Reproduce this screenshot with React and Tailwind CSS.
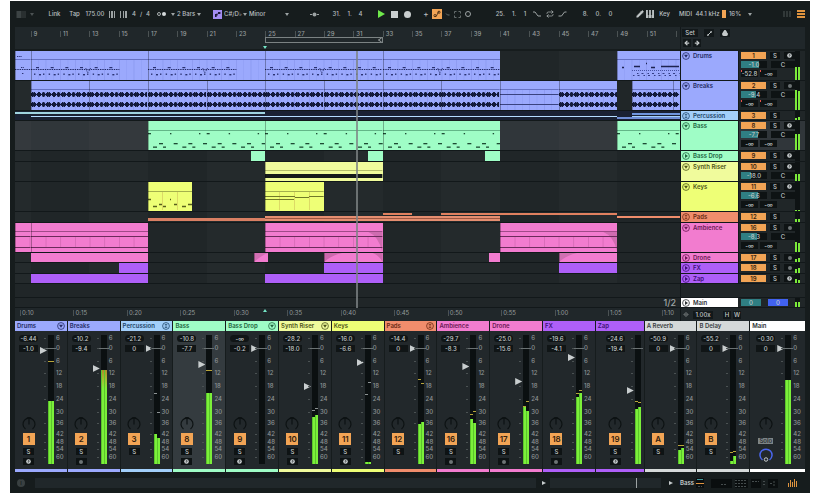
import { ArrowLeft, ArrowRight, Lock, Pencil, Repeat } from 'lucide-react';
import clsx from 'clsx';

const FIRST_BAR = 7.94;
const BARS = 45.33;
const BAR_PX = 14.67;

const pct = (bar) => `${((bar - FIRST_BAR) / BARS) * 100}%`;
const widthPct = (from, to) => `${((to - from) / BARS) * 100}%`;

const END = FIRST_BAR + BARS;

const tracks = [
  { id: '1', name: 'Drums', height: 'h-[30px]', color: 'bg-[#9ba9fd]', text: 'text-[#252c66]', fold: 'down', arm: 'note', vol: '-1.0', fill: 18, sends: ['-52.8', '-∞'], level: [13, 13],
    clips: [[FIRST_BAR, 9, 'drumsIntro'], [9, 17, 'drumsShort'], [17, 25, 'drumsShort'], [25, 33, 'drums'], [33, 41, 'drums'], [49, END, 'drumsOutro']] },
  { id: '2', name: 'Breaks', height: 'h-[30px]', color: 'bg-[#9ba9fd]', text: 'text-[#252c66]', fold: 'down', arm: 'dot', vol: '-9.4', fill: 15, sends: ['-∞', '-∞'], level: [20, 19],
    clips: [[9, 13, 'wave'], [13, 17, 'wave'], [17, 21, 'wave'], [21, 25, 'wave'], [25, 29, 'wave'], [29, 33, 'wave'], [33, 37, 'wave'], [37, 41, 'wave'], [41, 45, 'flat'], [45, 49, 'wave'], [50, 52.8, 'wave'], [52.8, END, 'wave']] },
  { id: '3', name: 'Percussion', height: 'h-[10px]', color: 'bg-[#a2cffa]', text: 'text-[#1d4568]', fold: 'group', level: [2, 3] },
  { id: '8', name: 'Bass', height: 'h-[30px]', color: 'bg-[#9ffdc6]', text: 'text-[#22653f]', fold: 'down', arm: 'note', vol: '-7.7', fill: 17, sends: ['-∞', '-∞'], level: [16, 16], selected: true,
    clips: [[17, 25, 'bass'], [25, 33, 'bass'], [33, 41, 'bass'], [49, END, 'bass']] },
  { id: '9', name: 'Bass Drop', height: 'h-[11px]', color: 'bg-[#9ffdc6]', text: 'text-[#22653f]', fold: 'right', arm: 'note', level: [0, 0],
    clips: [[24, 25], [32, 33], [40, 41]] },
  { id: '10', name: 'Synth Riser', height: 'h-[20px]', color: 'bg-[#f0fb9c]', text: 'text-[#4d5518]', fold: 'down', arm: 'note', vol: '-18.0', fill: 10, level: [7, 7],
    clips: [[25, 33, 'riser']] },
  { id: '11', name: 'Keys', height: 'h-[30px]', color: 'bg-[#eeff76]', text: 'text-[#4d5518]', fold: 'down', arm: 'note', vol: '-6.6', fill: 17, sends: ['-∞', '-∞'], level: [1, 1],
    clips: [[17, 20, 'keys'], [25, 29, 'chords']] },
  { id: '12', name: 'Pads', height: 'h-[11px]', color: 'bg-[#f08d6c]', text: 'text-[#6b2a14]', fold: 'group', level: [3, 3] },
  { id: '16', name: 'Ambience', height: 'h-[30px]', color: 'bg-[#f27ccf]', text: 'text-[#6a1853]', fold: 'down', arm: 'dot', vol: '-8.3', fill: 16, sends: ['-∞', '-∞'], level: [10, 9],
    clips: [[FIRST_BAR, 9, 'ambience'], [9, 17, 'ambience'], [25, 33, 'ambienceFade'], [41, 49, 'ambienceFade']] },
  { id: '17', name: 'Drone', height: 'h-[10px]', color: 'bg-[#f27ccf]', text: 'text-[#6a1853]', fold: 'right', arm: 'dot', level: [3, 4],
    clips: [[9, 17], [24.25, 25.2, 'fadeIn'], [29, 33, 'fadeBoth'], [40.25, 41], [45, 49, 'fadeIn']] },
  { id: '18', name: 'FX', height: 'h-[11px]', color: 'bg-[#ae5ff8]', text: 'text-[#3d0f75]', fold: 'right', arm: 'dot', level: [4, 5],
    clips: [[15, 17], [29, 33], [45, 49]] },
  { id: '19', name: 'Zap', height: 'h-[10px]', color: 'bg-[#ae5ff8]', text: 'text-[#3d0f75]', fold: 'right', arm: 'note', level: [4, 3],
    clips: [[9, 17], [25, 33]] },
];

// thin content of folded group tracks: from, to, top, height, colour
const overviews = {
  3: [
    [FIRST_BAR, 25, 1, 2, 'bg-[#9fd3e0]'],
    [9, 49, 5, 1, 'bg-[#b4dcff]'],
    [49, END, 6, 2, 'bg-[#6f8ed6]'],
    [50, END, 2, 2, 'bg-[#6f96dd]'],
    [50, END, 5, 1, 'bg-[#a2cffa]'],
  ],
  12: [
    [17, 25, 6, 3, 'bg-[#d97f63]'],
    [25, 41, 4, 2, 'bg-[#e58e70]'],
    [25, 41, 6, 1, 'bg-[#9c5641]'],
    [25, 41, 7, 2, 'bg-[#e58e70]'],
    [33, 35, 1, 2, 'bg-[#e0805f]'],
    [37, 49, 1, 2, 'bg-[#e0805f]'],
    [49, END, 4, 2, 'bg-[#f08d6c]'],
  ],
};

// fader is the slider travel, level/marks are pixels above the bottom of the meter
const strips = [
  { id: '1', name: 'Drums', color: 'bg-[#9ba9fd]', text: 'text-[#252c66]', badge: 'down', peak: '-6.44', vol: '-1.0', fader: 110, level: [63, 63], marks: [102, 102], arm: 'note' },
  { id: '2', name: 'Breaks', color: 'bg-[#9ba9fd]', text: 'text-[#252c66]', peak: '-10.2', vol: '-9.4', fader: 92, level: [94, 94], hot: true, arm: 'dot' },
  { id: '3', name: 'Percussion', color: 'bg-[#a2cffa]', text: 'text-[#1d4568]', badge: 'group', peak: '-21.2', vol: '0', fader: 112, level: [30, 26], marks: [70, 51], dim: true },
  { id: '8', name: 'Bass', color: 'bg-[#9ffdc6]', text: 'text-[#22653f]', peak: '-10.8', vol: '-7.7', fader: 96, level: [71, 71], marks: [93, 93], arm: 'note', selected: true },
  { id: '9', name: 'Bass Drop', color: 'bg-[#9ffdc6]', text: 'text-[#22653f]', badge: 'down', peak: '-∞', vol: '-0.2', fader: 112, level: [0, 0], arm: 'note' },
  { id: '10', name: 'Synth Riser', color: 'bg-[#f0fb9c]', text: 'text-[#4d5518]', badge: 'down', peak: '-28.2', vol: '-18.0', fader: 74, level: [47, 49], marks: [53, 55], dim: true, arm: 'note' },
  { id: '11', name: 'Keys', color: 'bg-[#eeff76]', text: 'text-[#4d5518]', peak: '-16.0', vol: '-6.6', fader: 98, level: [2, 2], marks: [69, 81], dim: true, arm: 'note' },
  { id: '12', name: 'Pads', color: 'bg-[#f08d6c]', text: 'text-[#6b2a14]', badge: 'group', peak: '-14.4', vol: '0', fader: 112, level: [40, 42], marks: [84, 80] },
  { id: '16', name: 'Ambience', color: 'bg-[#f27ccf]', text: 'text-[#6a1853]', peak: '-29.7', vol: '-8.3', fader: 94, level: [45, 41], marks: [49, 52], arm: 'dot' },
  { id: '17', name: 'Drone', color: 'bg-[#f27ccf]', text: 'text-[#6a1853]', peak: '-25.0', vol: '-15.6', fader: 79, level: [57, 53], marks: [57, 62], arm: 'dot' },
  { id: '18', name: 'FX', color: 'bg-[#ae5ff8]', text: 'text-[#3d0f75]', peak: '-19.6', vol: '-4.1', fader: 103, level: [67, 71], marks: [70, 73], arm: 'dot' },
  { id: '19', name: 'Zap', color: 'bg-[#ae5ff8]', text: 'text-[#3d0f75]', peak: '-24.6', vol: '-19.4', fader: 70, level: [55, 57], marks: [62, 61], arm: 'note', narrow: true },
  { id: 'A', name: 'A Reverb', color: 'bg-[#d5d9d9]', text: 'text-[#3a4042]', peak: '-50.9', vol: '0', fader: 112, level: [14, 16], marks: [18, 18] },
  { id: 'B', name: 'B Delay', color: 'bg-[#d5d9d9]', text: 'text-[#3a4042]', peak: '-55.2', vol: '0', fader: 112, level: [3, 8], marks: [11, 12] },
  { id: 'main', name: 'Main', color: 'bg-white', text: 'text-[#2c3133]', peak: '-0.30', vol: '0', fader: 112, level: [84, 84], main: true },
];

const scale = [[3, '6'], [13, '0'], [26, '6'], [38, '12'], [51, '18'], [64, '24'], [77, '30'], [88, '36'], [99, '42'], [107, '48'], [114, '54'], [122, '60']];

const times = ['0:10', '0:15', '0:20', '0:25', '0:30', '0:35', '0:40', '0:45', '0:50', '0:55', '1:00', '1:05', '1:10'];

const range = (n) => Array.from({ length: n }, (_, i) => i);

const Caret = ({ className }) => (
  <svg viewBox="0 0 4 3" className={clsx('h-[3px] w-1 shrink-0 fill-[#9da3a4]', className)}>
    <path d="M0 0h4L2 3z" />
  </svg>
);

const FoldIcon = ({ type }) => (
  <svg viewBox="0 0 16 16" className="h-2 w-2 shrink-0 fill-none stroke-current">
    <circle cx="8" cy="8" r="6.8" strokeWidth="1.6" />
    {type === 'down' && <path d="M4 5.5h8L8 11.5z" className="fill-current" stroke="none" />}
    {type === 'right' && <path d="M6 4v8L12 8z" className="fill-current" stroke="none" />}
    {type === 'group' && <path d="M5.5 5h5M5.5 8h5M5.5 11h5" strokeWidth="1.5" />}
  </svg>
);

const ArmButton = ({ type, label }) => (
  <button aria-label={`Arm ${label}`} className="flex h-[7px] w-[11px] items-center justify-center bg-[#0e1314]">
    {type === 'note' ? (
      <svg viewBox="0 0 10 10" className="h-[5px] w-[5px]">
        <circle cx="5" cy="5" r="4.6" fill="#d0d5d6" />
        <path d="M4.5 7.5V3l3 1.5" fill="none" stroke="#1b2022" strokeWidth="1.4" />
      </svg>
    ) : (
      <span className="h-1 w-1 rounded-full bg-[#6d7475]" />
    )}
  </button>
);

/* ---------- clip contents ---------- */

const ClipSvg = ({ width, height = 29, children }) => (
  <svg viewBox={`0 0 ${width} ${height}`} preserveAspectRatio="none" className="absolute inset-0 h-full w-full">
    {children}
  </svg>
);

const Grid = ({ width, color = '#5a67c4' }) =>
  range(Math.ceil(width / 7.335) - 1).map((i) => (
    <rect key={i} x={(i + 1) * 7.335} y="9" width="0.6" height="20" fill={color} opacity={i % 2 ? 0.3 : 0.15} />
  ));

const DrumNotes = ({ width, until }) => (
  <ClipSvg width={width}>
    <Grid width={width} />
    <path d={`M0 8.5H${width}`} stroke="#6571c4" strokeWidth="1" />
    <path d={`M0 18.5H${until}`} stroke="#222a66" strokeWidth="1" strokeDasharray="1.4 0.9" />
    {range(Math.floor(until / BAR_PX)).map((i) => (
      <g key={i} fill="#2a3272">
        <rect x={i * BAR_PX + 5} y="16" width="3" height="1.2" />
        <rect x={i * BAR_PX + 3} y="22.5" width="1.4" height="1.4" />
        <rect x={i * BAR_PX + 8} y="23" width="2" height="1.4" />
        <rect x={i * BAR_PX + 12} y="22.5" width="1.4" height="1.4" />
      </g>
    ))}
    <path d={`M${width / 2 - 4} 17l2 5 3-5`} stroke="#2a3272" strokeWidth="0.8" fill="none" strokeDasharray="1.5 1" />
  </ClipSvg>
);

const WAVE = [3, 5, 4, 5, 3, 1, 3, 5, 5, 3, 1, 4, 5, 4, 1.2];

const Wave = ({ width }) => (
  <ClipSvg width={width}>
    <Grid width={width} />
    <path d={`M0 8.5H${width}`} stroke="#6571c4" strokeWidth="1" />
    {range(Math.floor(width)).map((i) => {
      const h = WAVE[i % WAVE.length];
      return (
        <g key={i} fill="#141b3c">
          <rect x={i} y={13.5 - h / 2} width="1.05" height={h} />
          <rect x={i} y={23.5 - h / 2} width="1.05" height={h} />
        </g>
      );
    })}
  </ClipSvg>
);

const BassNotes = ({ width }) => (
  <ClipSvg width={width}>
    <path d={`M0 9.5H${width}`} stroke="#62b688" strokeWidth="1" />
    <g fill="#1d4a33">
      {range(Math.ceil(width / BAR_PX)).map((i) => (
        <rect key={i} x={i * BAR_PX + 11} y="22" width="4" height="1.3" />
      ))}
      {range(Math.ceil(width / BAR_PX / 2)).map((i) => (
        <g key={i}>
          <rect x={i * BAR_PX * 2 + 5} y="25.5" width="4" height="1.3" />
          <rect x={i * BAR_PX * 2 + 15} y="25.5" width="3" height="1.3" />
        </g>
      ))}
      {range(Math.ceil(width / BAR_PX / 4)).map((i) => (
        <g key={i}>
          <rect x={i * BAR_PX * 4} y="12" width="3" height="1.3" />
          <rect x={i * BAR_PX * 4 + 22} y="12" width="1.4" height="1.3" />
          <rect x={i * BAR_PX * 4 + 51} y="12" width="1.4" height="1.3" />
        </g>
      ))}
    </g>
  </ClipSvg>
);

const Ambience = ({ width, fade }) => (
  <ClipSvg width={width}>
    {fade && <path d={`M${width - 14} 9Q${width - 4} 13 ${width} 29V9z`} fill="#cf6cb0" />}
    {range(Math.ceil(width / BAR_PX) - 1).map((i) => (
      <rect key={i} x={(i + 1) * BAR_PX} y="14" width="0.7" height="10" fill="#a04a88" opacity="0.4" />
    ))}
    <path d={`M0 8.5H${width}`} stroke="#a04a88" strokeWidth="1" />
    <path d={`M0 13.5H${width}M0 24.5H${width}`} stroke="#6b2a5a" strokeWidth="1" />
  </ClipSvg>
);

const ClipContent = ({ kind, width }) => {
  switch (kind) {
    case 'drums':
      return <DrumNotes width={width} until={width} />;
    case 'drumsShort':
      return <DrumNotes width={width} until={width - 29} />;
    case 'drumsIntro':
      return (
        <ClipSvg width={width}>
          <path d={`M0 8.5H${width}`} stroke="#6571c4" />
          <path d={`M0 18.5H${width}`} stroke="#222a66" strokeDasharray="1.4 0.9" />
          <path d="M2 5.5H7M6 16.5h3M7 22.5h2" stroke="#2a3272" strokeDasharray="1.4 0.8" />
        </ClipSvg>
      );
    case 'drumsOutro':
      return (
        <ClipSvg width={width}>
          <Grid width={width} />
          <path d={`M0 8.5H${width}`} stroke="#6571c4" />
          <path d="M17 15.5h6M44 15.5h18M5 16.5h2M34 16.5h4M29 12.5h1" stroke="#1d2350" strokeWidth="1.4" />
          <path d={`M15 19.5H${width}`} stroke="#4752a3" strokeDasharray="1 1" />
          <path d={`M16 24.5H${width}M20 22.5H${width}`} stroke="#333c85" strokeWidth="1" strokeDasharray="1.5 3 2 4" />
        </ClipSvg>
      );
    case 'wave':
      return <Wave width={width} />;
    case 'flat':
      return (
        <ClipSvg width={width}>
          <Grid width={width} />
          <path d={`M0 8.5H${width}`} stroke="#6571c4" />
          <path d={`M0 13.5H${width}M0 23.5H${width}`} stroke="#39427f" />
        </ClipSvg>
      );
    case 'bass':
      return <BassNotes width={width} />;
    case 'riser':
      return (
        <ClipSvg width={width} height={19}>
          <path d={`M0 8.5H${width}`} stroke="#b4bd6a" />
          <rect y="12" width={width} height="4" fill="#15191a" />
        </ClipSvg>
      );
    case 'keys':
      return (
        <ClipSvg width={width}>
          <path d={`M0 9.5H${width}`} stroke="#a4b04d" />
          <path d="M14.5 10v18M29.5 10v18" stroke="#d3c95e" strokeWidth="0.7" />
          <path d="M0 17.5h3M22 17.5h1M11 22.5h3M26 22.5h3M40 22.5h4M5 24.5h4M15 24.5h3M34 24.5h4" stroke="#585f1d" strokeWidth="1.3" />
        </ClipSvg>
      );
    case 'chords':
      return (
        <ClipSvg width={width}>
          <path d={`M0 9.5H${width}`} stroke="#a4b04d" />
          <path d="M14.5 10v18M29.5 10v18M44.5 10v18" stroke="#d3c95e" strokeWidth="0.7" />
          <path d={`M0 14.5H30M0 17.5h29M30 15.5h14M44 14.5H${width}`} stroke="#6f7828" strokeWidth="1" />
        </ClipSvg>
      );
    case 'ambience':
      return <Ambience width={width} />;
    case 'ambienceFade':
      return <Ambience width={width} fade />;
    case 'fadeIn':
      return (
        <ClipSvg width={width} height={9}>
          <path d={`M0 0H${Math.min(width, 18)}Q8 2 0 9z`} fill="#d26fb3" />
        </ClipSvg>
      );
    case 'fadeBoth':
      return (
        <ClipSvg width={width} height={9}>
          <path d="M0 0H18Q8 2 0 9z" fill="#cc68ad" />
          <path d={`M${width - 10} 0Q${width - 4} 2 ${width} 9V0z`} fill="#cc68ad" />
        </ClipSvg>
      );
    default:
      return null;
  }
};

const Lane = ({ track }) => (
  <div className={clsx('relative border-b border-[#12181a]', track.height, track.selected ? 'bg-[#30363a]' : 'bg-[#202628]')}>
    {[5, 13, 21, 29, 37, 45].map((bar) => (
      <div key={bar} className="absolute inset-y-0 bg-white/2" style={{ left: pct(Math.max(bar, FIRST_BAR)), width: widthPct(Math.max(bar, FIRST_BAR), bar + 4) }} />
    ))}
    {overviews[track.id] && (
      <div className={clsx('absolute inset-0', track.id === '3' && 'bg-[#1a2133]')}>
        {overviews[track.id].map(([from, to, top, height, color]) => (
          <div key={`${from}-${top}`} className={clsx('absolute', color)} style={{ left: pct(from), width: widthPct(from, to), top, height }} />
        ))}
      </div>
    )}
    {track.clips?.map(([from, to, kind]) => (
      <div key={from} className={clsx('absolute inset-y-0 overflow-hidden', track.color)} style={{ left: pct(from), width: widthPct(from, to) }}>
        <ClipContent kind={kind} width={(to - from) * BAR_PX} />
        {kind && <span className="absolute inset-y-0 left-0 w-px bg-black/30" />}
      </div>
    ))}
  </div>
);

/* ---------- arrangement ---------- */

const Ruler = () => (
  <div className="relative mb-0.5 h-[22px] bg-[#20272a] text-[#969c9d]">
    {range(23).map((i) => (
      <span key={i} className="absolute top-1 border-l border-[#4b5253] pl-0.5 leading-[6px]" style={{ left: pct(9 + i * 2) }}>
        {i < 22 ? 9 + i * 2 : '\u00a0'}
      </span>
    ))}
    <div className="absolute top-[10px] h-[6px] border border-[#7b8283]" style={{ left: pct(25), width: widthPct(25, 33) }}>
      <svg viewBox="0 0 4 5" className="absolute right-0 top-0 h-[4px] w-[4px] fill-none stroke-[#b9bebf]">
        <path d="M4 0L0 2.5 4 5" />
      </svg>
    </div>
    <svg viewBox="0 0 4 3" className="absolute bottom-0 h-[3px] w-1 -translate-x-1/2 fill-[#74e6c6]" style={{ left: pct(25) }}>
      <path d="M0 0h4L2 3z" />
    </svg>
  </div>
);

const Timeline = () => (
  <div className="min-w-0 flex-1">
    <Ruler />
    <div className="relative">
      {tracks.map((track) => (
        <Lane key={track.id} track={track} />
      ))}
      <div className="h-[13px] bg-[#202628]" />
      <div className="flex h-[11px] items-center justify-end border-y border-[#12181a] bg-[#202628] pr-1 text-[9px] text-[#9fa5a6]">1/2</div>
      <div className="absolute inset-y-0 w-0.5 bg-[#7d8384]/80" style={{ left: pct(31.2) }} />
    </div>
    <div className="relative h-[13px] bg-[#20272a] font-normal text-[#969c9d]">
      {times.map((time, i) => (
        <span key={time} className="absolute top-0.5 border-l border-[#4b5253] pl-px leading-[6px]" style={{ left: `${0.75 + i * 8.04}%` }}>
          {time}
        </span>
      ))}
      <svg viewBox="0 0 4 3" className="absolute top-px h-[3px] w-1 -translate-x-1/2 fill-[#74e6c6]" style={{ left: pct(25) }}>
        <path d="M0 3h4L2 0z" />
      </svg>
    </div>
  </div>
);

const MiniMeter = ({ level }) => (
  <div className="flex h-full w-[5px] items-end gap-px bg-[#0e1314]">
    {level.map((h, i) => (
      <span key={i} className="w-[2px] bg-[#7bea3a]" style={{ height: h }} />
    ))}
  </div>
);

const TrackHeader = ({ track }) => (
  <div className={clsx('flex border-b border-[#12181a]', track.height, track.selected ? 'bg-[#30363a]' : 'bg-[#202628]')}>
    <div className={clsx('flex w-[57px] items-start gap-[3px] pl-px pt-px', track.color, track.text)}>
      <button aria-label={`Fold ${track.name}`} className="block">
        <FoldIcon type={track.fold} />
      </button>
      <span className="whitespace-nowrap font-semibold leading-2">{track.name}</span>
    </div>
    <div className="flex flex-1 flex-col gap-0.5 border-l border-[#12181a] pl-0.5 pt-px text-[#c5cacb]">
      <div className="flex">
        <button className="h-[7px] w-[25px] bg-[#f2a455] font-semibold leading-[7px] text-[#3b2510]">{track.id}</button>
        <button className="ml-1 h-[7px] w-[10px] bg-[#0e1314] leading-[7px]">S</button>
        <span className="ml-1">{track.arm && <ArmButton type={track.arm} label={track.name} />}</span>
      </div>
      {track.vol && (
        <div className="flex gap-1">
          <span className="relative h-[7px] w-[26px] bg-[#0e1314] text-center leading-[7px]">
            <span className="absolute inset-y-0 left-0 bg-[#2f7f83]" style={{ width: track.fill }} />
            <span className="relative">{track.vol}</span>
          </span>
          <span className="h-[7px] w-6 bg-[#0e1314] text-center leading-[7px]">C</span>
        </div>
      )}
      {track.sends && (
        <div className="flex gap-0.5">
          {track.sends.map((send, i) => (
            <span key={i} className="relative h-[7px] w-[17px] bg-[#0e1314] text-center leading-[7px]">
              {track.id < 3 && <span className="absolute left-0 top-0 h-0.5 w-px bg-[#e8524a]" />}
              {send}
            </span>
          ))}
        </div>
      )}
    </div>
    <div className="w-[10px]">
      <MiniMeter level={track.level} />
    </div>
  </div>
);

const TrackHeaders = () => (
  <div className="w-[125px] border-l border-[#12181a]">
    <div className="mb-0.5 h-[22px] bg-[#20272a] pl-px text-[#c5cacb]">
      <div className="flex items-center gap-1.5 pt-0.5">
        <button className="w-4 bg-[#12181a] leading-2">Set</button>
        <button aria-label="Draw automation" className="flex h-2 w-2.5 items-center justify-center bg-[#12181a]">
          <svg viewBox="0 0 8 8" className="h-[5px] w-[5px] fill-none stroke-[#d5dadb]"><path d="M1 7l6-6" strokeWidth="1.4" /><circle cx="1.5" cy="6.5" r="1" /><circle cx="6.5" cy="1.5" r="1" /></svg>
        </button>
        <button aria-label="Lock" className="flex h-2 w-2.5 items-center justify-center bg-[#12181a]"><Lock size={6} strokeWidth={4} className="fill-current" /></button>
      </div>
      <div className="flex gap-0.5 pl-px pt-0.5">
        <button aria-label="Previous locator" className="bg-[#12181a] p-px"><ArrowLeft size={6} strokeWidth={5} /></button>
        <button aria-label="Next locator" className="bg-[#12181a] p-px"><ArrowRight size={6} strokeWidth={5} /></button>
      </div>
    </div>
    {tracks.map((track) => (
      <TrackHeader key={track.id} track={track} />
    ))}
    <div className="h-[13px] bg-[#202628]" />
    <div className="flex h-[11px] border-y border-[#12181a] bg-[#202628] text-[#c5cacb]">
      <div className="flex w-[57px] items-center gap-[3px] bg-white pl-px text-[#2c3133]">
        <FoldIcon type="right" />
        <span className="font-semibold leading-2">Main</span>
      </div>
      <div className="flex flex-1 items-center gap-[7px] pl-[3px]">
        <span className="h-[7px] w-5 bg-[#2f7f83] text-center leading-[7px]">0</span>
        <span className="h-[7px] w-5 bg-[#4162f0] text-center leading-[7px]">0</span>
      </div>
      <div className="w-[10px]"><MiniMeter level={[5, 5]} /></div>
    </div>
    <div className="flex h-[13px] items-center bg-[#20272a] pl-0.5 text-[#c5cacb]">
      <svg viewBox="0 0 8 8" className="h-[5px] w-[6px] stroke-[#9da3a4]"><path d="M0 4h1M2 2v4M4 0v8M6 2v4M7 4h1" /></svg>
      <span className="ml-1 w-5 bg-[#12181a] text-center leading-2">1.00x</span>
      <button className="ml-2.5 w-2 bg-[#12181a] leading-2">H</button>
      <button className="ml-0.5 w-2 bg-[#12181a] leading-2">W</button>
    </div>
  </div>
);

/* ---------- mixer ---------- */

const Knob = ({ blue }) => (
  <svg viewBox="0 0 28 28" className="h-[14px] w-[14px] shrink-0 fill-none">
    <path d="M7 24A12 12 0 1 1 21 24" stroke={blue ? '#4a66ee' : '#0d1213'} strokeWidth={blue ? 3 : 2.4} />
    {blue ? (
      <circle cx="14" cy="23" r="3.5" stroke="#c5cacb" strokeWidth="2" />
    ) : (
      <path d="M14 3v12M11 0h6l-3 3z" stroke="#0d1213" strokeWidth="2.4" />
    )}
  </svg>
);

const Meter = ({ strip }) => (
  <div className="relative ml-px flex h-[129px] w-[6px] items-end bg-[#0b1011]">
    {scale.map(([y]) => (
      <span key={y} className="absolute -left-1 h-px w-0.5 bg-[#4b5253]" style={{ top: y }} />
    ))}
    {strip.level.map((h, i) => (
      <span key={i} className={clsx('w-[3px] border-l border-[#5cc42c]', strip.hot ? 'bg-linear-to-t from-[#7bf03a] from-80% to-[#b08a2a]' : 'bg-[#7bf03a]', h === 0 && 'hidden')} style={{ height: h }} />
    ))}
    {strip.marks?.map((y, i) => (
      <span key={`m${i}`} className={clsx('absolute h-px w-[3px]', i ? 'right-0' : 'left-0', strip.dim ? 'bg-[#8d9394]' : 'bg-[#b9a53a]')} style={{ bottom: y }} />
    ))}
    <span className="absolute -left-0.5 top-[13px] h-px w-[10px] bg-[#6a7172]" />
  </div>
);

const Strip = ({ strip }) => (
  <section className={clsx('min-w-0 overflow-hidden', strip.selected ? 'bg-[#343b3f]' : 'bg-[#22282b]')}>
    <header className={clsx('flex h-[10px] items-center justify-between px-0.5', strip.color, strip.text)}>
      <span className="whitespace-nowrap font-semibold">{strip.name}</span>
      {strip.badge && <FoldIcon type={strip.badge} />}
    </header>
    <div className={clsx('flex h-[138px] pt-1', strip.narrow ? 'pl-[10px]' : strip.main ? 'pl-1.5' : 'pl-1')}>
      <div className="flex h-[130px] w-[19px] shrink-0 flex-col items-center text-[#c5cacb]">
        <span className="h-[7px] w-[19px] rounded-sm bg-[#101516] text-center leading-[7px]">{strip.peak}</span>
        <span className="mt-[3px] h-[7px] w-[19px] bg-[#101516] text-center leading-[7px]">{strip.vol}</span>
        <div className="mt-auto flex h-12 flex-col items-center">
          <Knob />
          {strip.main ? (
            <>
              <button className="mb-1 mt-[7px] h-[6px] bg-[#7e8587] px-px leading-[6px] text-[#22282b]">Solo</button>
              <Knob blue />
            </>
          ) : (
            <>
              <button className="mt-0.5 h-3 w-3 bg-[#f2a455] text-[8px] font-semibold leading-3 text-[#33200d]">{strip.id}</button>
              <button className="mt-[3px] h-[7px] w-[11px] bg-[#0e1314] leading-[7px]">S</button>
              <span className="mt-[3px]">{strip.arm && <ArmButton type={strip.arm} label={strip.name} />}</span>
            </>
          )}
        </div>
      </div>
      <input
        type="range"
        aria-label={`${strip.name} volume`}
        min="0"
        max="122"
        defaultValue={strip.fader}
        className="ml-0.5 h-[129px] w-[7px] shrink-0 appearance-none bg-transparent [direction:rtl] [writing-mode:vertical-lr] [&::-webkit-slider-thumb]:h-[7px] [&::-webkit-slider-thumb]:w-[7px] [&::-webkit-slider-thumb]:appearance-none [&::-webkit-slider-thumb]:bg-[#c9cecf] [&::-webkit-slider-thumb]:[clip-path:polygon(0_0,100%_50%,0_100%)]"
      />
      <Meter strip={strip} />
      {!strip.narrow && (
        <div className="relative ml-0.5 h-[129px] w-2 shrink-0 text-[#8f9596]">
          {scale.map(([y, label]) => (
            <span key={y} className="absolute left-0 -translate-y-1/2 leading-[6px]" style={{ top: y }}>{label}</span>
          ))}
        </div>
      )}
    </div>
    <div className={clsx('h-[3px]', strip.color)} />
  </section>
);

const Mixer = () => (
  <div className="grid grid-cols-[repeat(11,53fr)_49fr_53fr_53fr_56fr] gap-px">
    {strips.map((strip) => (
      <Strip key={strip.id} strip={strip} />
    ))}
  </div>
);

/* ---------- transport ---------- */

const Select = ({ label, value, className }) => (
  <label className={clsx('flex items-center', className)}>
    <select aria-label={label} defaultValue={value} className="min-w-0 flex-1 appearance-none bg-transparent">
      <option>{value}</option>
    </select>
    <Caret />
  </label>
);

const Position = ({ value, label, className }) => (
  <div aria-label={label} className={clsx('flex justify-around whitespace-pre', className)}>
    {value.map((part, i) => (
      <span key={i}>{part}</span>
    ))}
  </div>
);

const TransportBar = () => (
  <header className="flex h-[26px] items-center text-[#b9bfc0]">
    <div className="flex items-center gap-0.5">
      <svg viewBox="0 0 10 7" className="h-[7px] w-[13px] fill-[#3c4344]"><path d="M0 0h5v7H0zM6 0h1v7H6zM8 0h1v7H8z" /></svg>
      <span className="w-1"><Caret className="opacity-40" /></span>
      <button className="ml-2 w-[21px]">Link</button>
      <button className="w-[15px]">Tap</button>
      <input aria-label="Tempo" defaultValue="175.00" className="w-[22px] bg-transparent text-center" />
      <svg viewBox="0 0 9 7" className="h-[7px] w-[9px] fill-[#9da3a4]"><path d="M1 0h1v7H1zM3 0h2v7H3zM6 0h1v7H6z" /></svg>
      <svg viewBox="0 0 9 7" className="h-[7px] w-[9px] fill-[#9da3a4]"><path d="M1 0h1v7H1zM4 0h1v7H4zM6 0h2v7H6z" /></svg>
      <span className="flex w-[22px] justify-around"><span>4</span><span>/</span><span>4</span></span>
      <button aria-label="Metronome" className="flex w-[15px] items-center justify-center gap-px">
        <span className="h-1 w-1 rounded-full border border-[#aab0b1]" />
        <span className="h-1 w-1 rounded-full bg-[#d5dadb]" />
      </button>
      <span className="w-1"><Caret /></span>
      <Select label="Quantization" value="2 Bars" className="w-6" />
      <button aria-label="Scale mode" className="ml-2.5 flex h-[9px] w-[9px] items-center justify-center bg-[#a48df2]">
        <svg viewBox="0 0 9 9" className="h-[9px] w-[9px] fill-[#1d1738]"><path d="M2 4h1.6v3H2zM3.5 3.5h1.2v2H3.5zM5 2h2.4v2H5z" /></svg>
      </button>
      <Select label="Root note" value="C#/D♭" className="w-[23px]" />
      <Select label="Scale" value="Minor" className="w-10" />
    </div>

    <div className="ml-auto flex items-center gap-0.5">
      <svg viewBox="0 0 11 5" className="h-[5px] w-[11px] fill-[#9da3a4]"><circle cx="5.5" cy="2.5" r="2" /><path d="M1 2h2v1H1zM8 2h2v1H8z" /></svg>
      <Position label="Position" value={['31.', '1.', '4']} className="ml-[7px] w-[37px]" />
      <button aria-label="Play" className="ml-2 flex w-[11px] justify-center">
        <svg viewBox="0 0 7 8" className="h-2 w-[7px] fill-[#6fe84b]"><path d="M0 0l7 4-7 4z" /></svg>
      </button>
      <button aria-label="Stop" className="flex w-[11px] justify-center"><span className="h-[7px] w-[7px] bg-[#c9cecf]" /></button>
      <button aria-label="Record" className="flex w-[11px] justify-center"><span className="h-[7px] w-[7px] rounded-full bg-[#c9cecf]" /></button>
      <button aria-label="Overdub" className="ml-[7px] w-2 text-[8px] leading-2">+</button>
      <button aria-label="Automation arm" className="flex h-[10px] w-[10px] items-center justify-center bg-[#f2a455]">
        <svg viewBox="0 0 10 10" className="h-2 w-2 fill-none stroke-[#3b2510]"><path d="M2 8h2l3-6h1" /><circle cx="2.5" cy="7" r="1.4" /><circle cx="7.5" cy="2.8" r="1.4" /></svg>
      </button>
      <svg viewBox="0 0 7 5" className="h-[5px] w-[7px] fill-none stroke-[#656c6d]"><path d="M2 1.5l1.5 1.5h2" /></svg>
      <svg viewBox="0 0 9 7" className="h-[7px] w-[9px] fill-none stroke-[#656c6d]"><path d="M1.5 2.5v-2h2M5.5 .5h2v2M7.5 4.5v2h-2M3.5 6.5h-2v-2" /></svg>
      <button aria-label="Session record" className="flex w-2 justify-center"><span className="h-[6px] w-[6px] rounded-full border border-[#9da3a4]" /></button>
    </div>

    <div className="ml-5 flex items-center gap-0.5">
      <Position label="Loop start" value={['25.', '1.', '1']} className="w-[38px]" />
      <svg viewBox="0 0 10 6" className="h-[6px] w-[10px] fill-none stroke-[#9da3a4]"><path d="M1 1h2l3 4h3" /></svg>
      <button aria-label="Loop" className="flex w-[11px] justify-center"><Repeat size={8} /></button>
      <svg viewBox="0 0 10 6" className="h-[6px] w-[11px] fill-none stroke-[#9da3a4]"><path d="M1 5h3l3-4h2" /></svg>
      <Position label="Loop length" value={['8.', '0.', '0']} className="ml-[9px] w-[37px]" />
    </div>

    <div className="ml-auto flex items-center gap-0.5">
      <button aria-label="Draw mode"><Pencil size={8} className="fill-[#c9cecf]" /></button>
      <button aria-label="Computer keyboard" className="mr-px">
        <svg viewBox="0 0 8 8" className="h-2 w-2"><path d="M0 0h8v8H0z" fill="#b9bfc0" /><path d="M2.5 0v5M5.5 0v5" stroke="#161c1d" strokeWidth="1.2" /><path d="M2.5 5v3M5.5 5v3" stroke="#161c1d" strokeWidth=".5" /></svg>
      </button>
      <button className="w-[15px]">Key</button>
      <button className="ml-1 w-[15px]">MIDI</button>
      <span className="w-[25px] whitespace-nowrap text-center">44.1 kHz</span>
      <span className="h-2 w-1 bg-[#f2a455]" />
      <span className="w-[14px] text-center">16%</span>
      <span className="flex w-3 justify-center"><Caret /></span>
      <svg viewBox="0 0 9 6" className="ml-6 h-[6px] w-[10px] stroke-[#4d5455]"><path d="M1.5 0v6M4.5 0v6M7.5 0v6" /></svg>
      <button aria-label="Arrangement view" className="flex w-[11px] flex-col items-end gap-px">
        <span className="h-0.5 w-2 bg-[#e0943f]" />
        <span className="h-0.5 w-2 bg-[#e0943f]" />
        <span className="h-0.5 w-2 bg-[#e0943f]" />
      </button>
    </div>
  </header>
);

const StatusBar = () => (
  <footer className="mt-1 flex h-[17px] items-center pb-1 pt-px text-[#c5cacb]">
    <span className="ml-0.5 flex h-2 w-2 items-center justify-center rounded-full bg-[#394041] text-[#161c1d]">i</span>
    <div className="ml-2.5 h-2.5 flex-1 bg-[#20272a]" />
    <svg viewBox="0 0 4 4" className="ml-1.5 h-1 w-1 fill-[#c5cacb]"><path d="M0 0l4 2-4 2z" /></svg>
    <div className="ml-1 flex h-2.5 w-[111px] justify-end bg-[#20272a] pr-6">
      <span className="h-full w-px bg-[#9da3a4]" />
    </div>
    <svg viewBox="0 0 4 4" className="ml-2 h-1 w-1 fill-[#c5cacb]"><path d="M0 0l4 2-4 2z" /></svg>
    <span className="ml-[7px] w-[13px] font-semibold">Bass</span>
    <svg viewBox="0 0 84 11" className="ml-[3px] h-[11px] w-[84px] fill-[#0a0e0f]">
      <path d="M0 0h8v10H0zM15 1h21v9H15zM39 1h13v9H39zM55 1h10v9H55zM72 1h10v9H72z" />
      <path d="M1 1.5h6" stroke="#43989b" />
      <path d="M0 5.5h8" stroke="#e0943f" />
      <path d="M2 8.5h4M25 6.5h6M39 2.5h12M39 5.5h12M39 8.5h12M56 3.5h7M67 3.5h3M67 6.5h3M74 5.5h3M78 3v5" stroke="#454c4d" strokeDasharray="2 1" />
    </svg>
    <svg viewBox="0 0 9 8" className="ml-2 mr-2 h-2 w-[9px] shrink-0 fill-[#e0943f]"><path d="M0 4h1v4H0zM2 1h1v7H2zM4 3h1v5H4zM6 0h1v8H6zM8 2h1v6H8z" /></svg>
  </footer>
);

const App = () => (
  <div className="bg-white pb-[3px] pl-[10px] pr-1 pt-px">
    <main className="bg-[#161c1d] px-[5px] font-['Inter',sans-serif] text-[6px] font-medium leading-2">
      <TransportBar />
      <div className="flex">
        <Timeline />
        <TrackHeaders />
      </div>
      <Mixer />
      <StatusBar />
    </main>
  </div>
);

export default App;
